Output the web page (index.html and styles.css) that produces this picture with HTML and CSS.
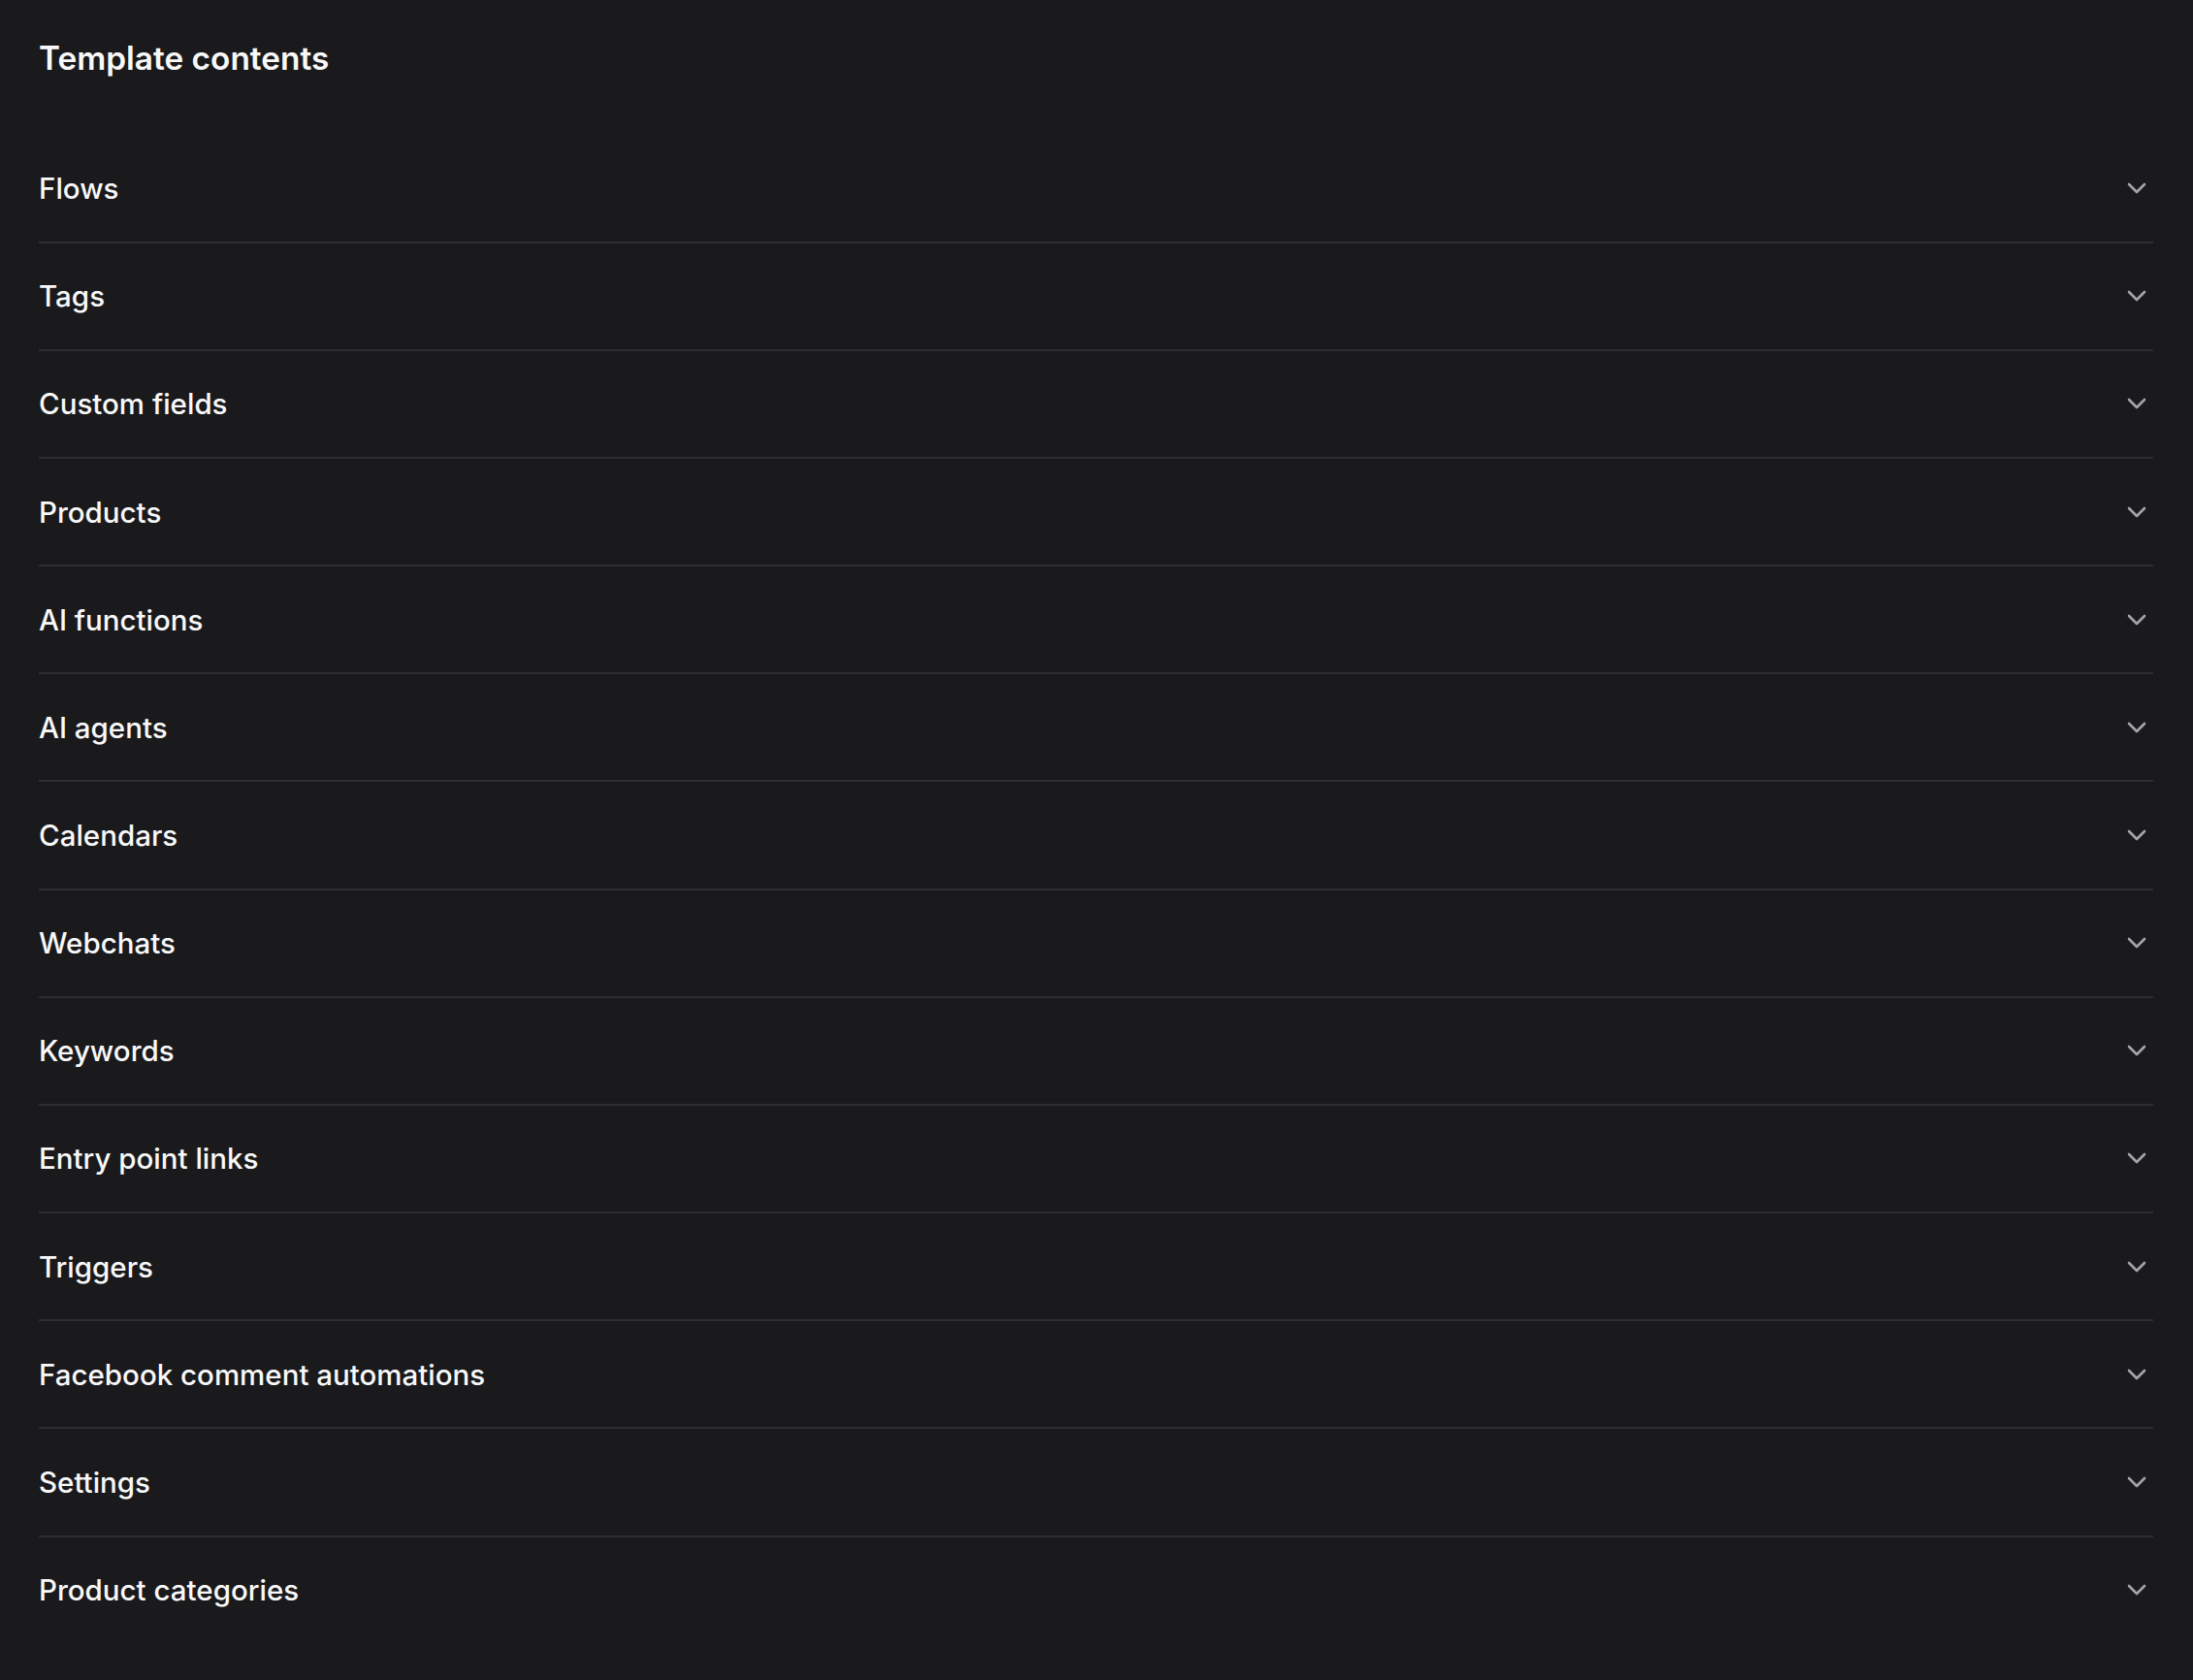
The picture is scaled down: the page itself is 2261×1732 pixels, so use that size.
FILE: index.html
```html
<!DOCTYPE html>
<html>
<head>
    <meta charset="utf-8">
    <title>Template contents</title>
<link rel="stylesheet" href="styles.css">
</head>
<body>
    <div class="panel">
        <h2 class="title">Template contents</h2>
        <ul class="sections">
            <li class="section"><span>Flows</span><svg class="chev" viewBox="0 0 20 12"><path d="M2 2l8 8 8-8"/></svg></li>
            <li class="section"><span>Tags</span><svg class="chev" viewBox="0 0 20 12"><path d="M2 2l8 8 8-8"/></svg></li>
            <li class="section"><span>Custom fields</span><svg class="chev" viewBox="0 0 20 12"><path d="M2 2l8 8 8-8"/></svg></li>
            <li class="section"><span>Products</span><svg class="chev" viewBox="0 0 20 12"><path d="M2 2l8 8 8-8"/></svg></li>
            <li class="section"><span>AI functions</span><svg class="chev" viewBox="0 0 20 12"><path d="M2 2l8 8 8-8"/></svg></li>
            <li class="section"><span>AI agents</span><svg class="chev" viewBox="0 0 20 12"><path d="M2 2l8 8 8-8"/></svg></li>
            <li class="section"><span>Calendars</span><svg class="chev" viewBox="0 0 20 12"><path d="M2 2l8 8 8-8"/></svg></li>
            <li class="section"><span>Webchats</span><svg class="chev" viewBox="0 0 20 12"><path d="M2 2l8 8 8-8"/></svg></li>
            <li class="section"><span>Keywords</span><svg class="chev" viewBox="0 0 20 12"><path d="M2 2l8 8 8-8"/></svg></li>
            <li class="section"><span>Entry point links</span><svg class="chev" viewBox="0 0 20 12"><path d="M2 2l8 8 8-8"/></svg></li>
            <li class="section"><span>Triggers</span><svg class="chev" viewBox="0 0 20 12"><path d="M2 2l8 8 8-8"/></svg></li>
            <li class="section"><span>Facebook comment automations</span><svg class="chev" viewBox="0 0 20 12"><path d="M2 2l8 8 8-8"/></svg></li>
            <li class="section"><span>Settings</span><svg class="chev" viewBox="0 0 20 12"><path d="M2 2l8 8 8-8"/></svg></li>
            <li class="section"><span>Product categories</span><svg class="chev" viewBox="0 0 20 12"><path d="M2 2l8 8 8-8"/></svg></li>
        </ul>
    </div>
</body>
</html>
```

FILE: styles.css
```css
*{
    margin: 0;
    padding: 0;
    box-sizing: border-box;
}
html, body{
    background: #1a1a1c;
}
body{
    font-family: Inter, "Noto Sans", sans-serif;
    color: #f8f8f9;
}
.panel{
    padding: 40px 41px 0 40px;
}
.title{
    font-size: 33.4px;
    line-height: 40px;
    font-weight: 600;
    margin-bottom: 59.5px;
}
.sections{
    list-style: none;
}
.section{
    display: flex;
    align-items: center;
    justify-content: space-between;
    height: 111.17px;
    border-bottom: 2px solid #2e2e32;
    font-size: 29.5px;
    font-weight: 500;
}
.section:last-child{
    border-bottom: none;
    padding-bottom: 2px;
}
.chev{
    width: 20px;
    height: 12px;
    margin-right: 7px;
    fill: none;
    stroke: #a4a4ac;
    stroke-width: 2.6;
    stroke-linecap: round;
    stroke-linejoin: round;
}
```
